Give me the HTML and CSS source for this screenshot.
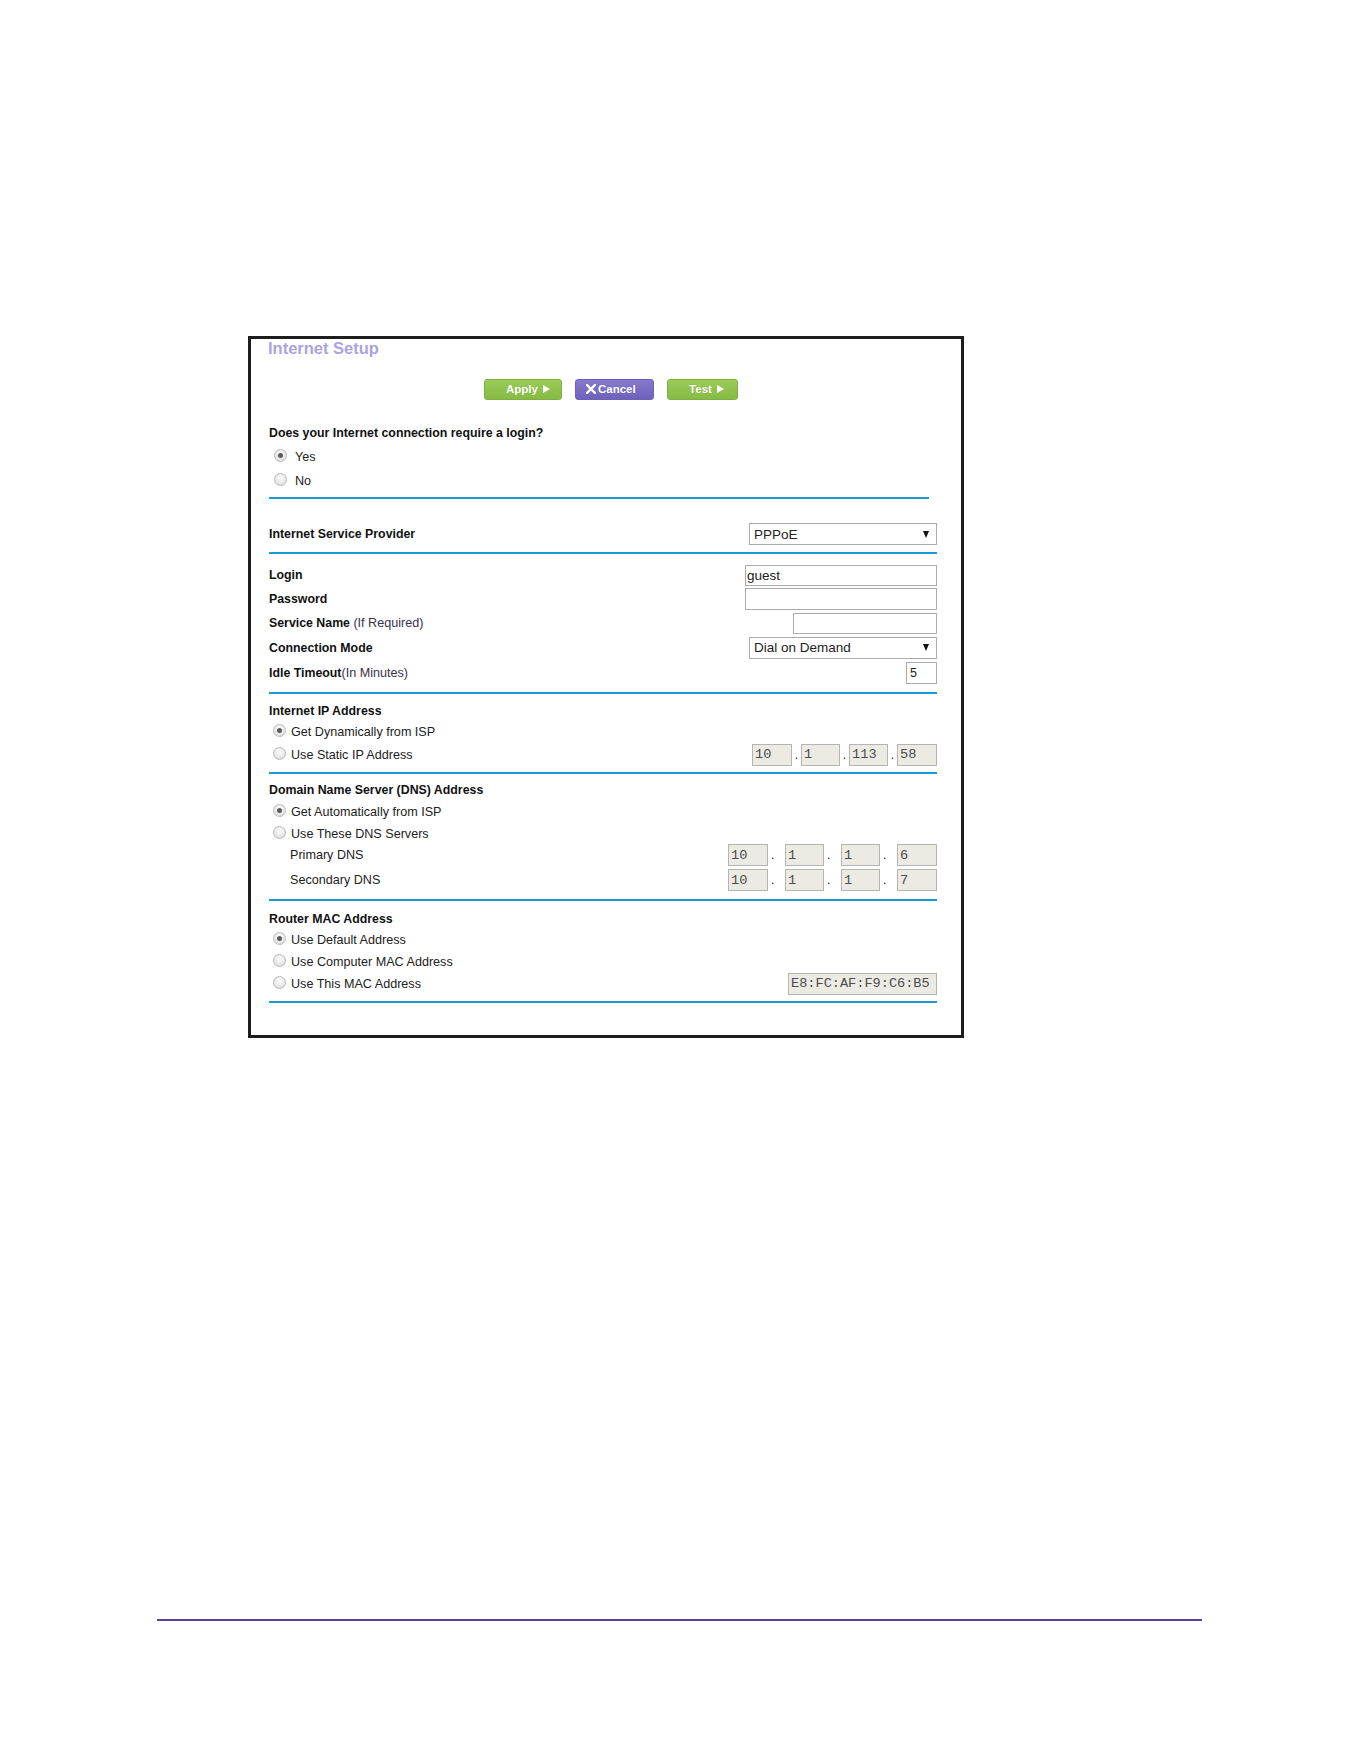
FILE: index.html
```html
<!DOCTYPE html>
<html lang="en">

<head>
    <meta charset="UTF-8">
    <meta name="viewport" content="width=device-width, initial-scale=1.0">
    <title>Internet Setup</title>
    <link rel="stylesheet" href="styles.css">
</head>

<body>
    <div class="page">
        <div class="setup">
            <h1 class="title">Internet Setup</h1>

            <div class="actions">
                <button class="btn btn-go btn-apply">Apply <span class="tri"></span></button>
                <button class="btn btn-cancel">
                    <svg class="x" width="10" height="10" viewBox="0 0 10 10">
                        <path d="M1 1 L9 9 M9 1 L1 9" stroke="#fff" stroke-width="2.4" stroke-linecap="square" />
                    </svg>Cancel</button>
                <button class="btn btn-go btn-test">Test <span class="tri"></span></button>
            </div>

            <!-- login required -->
            <div class="row head first">Does your Internet connection require a login?</div>
            <div class="row opt big"><span class="radio on"></span>Yes</div>
            <div class="row opt big"><span class="radio"></span>No</div>
            <div class="rule short"></div>

            <!-- provider -->
            <div class="row head isp">
                <span>Internet Service Provider</span>
                <div class="select sel-isp"><span>PPPoE</span><span class="arrow"></span></div>
            </div>
            <div class="rule r2"></div>

            <!-- account -->
            <div class="row head acc first-acc">
                <span>Login</span>
                <div class="field f-login">guest</div>
            </div>
            <div class="row head acc">
                <span>Password</span>
                <div class="field f-pass"></div>
            </div>
            <div class="row head acc">
                <span>Service Name <span class="note">(If Required)</span></span>
                <div class="field f-service"></div>
            </div>
            <div class="row head acc h25">
                <span>Connection Mode</span>
                <div class="select sel-mode"><span>Dial on Demand</span><span class="arrow"></span></div>
            </div>
            <div class="row head acc h26">
                <span>Idle Timeout<span class="note">(In Minutes)</span></span>
                <div class="field f-idle">5</div>
            </div>
            <div class="rule r2"></div>

            <!-- internet ip -->
            <div class="row head sub h21">Internet IP Address</div>
            <div class="row opt h22"><span class="radio on"></span>Get Dynamically from ISP</div>
            <div class="row opt h23 split">
                <span class="opt-lbl"><span class="radio"></span>Use Static IP Address</span>
                <div class="ip tight">
                    <span class="oct">10</span><span class="dot">.</span>
                    <span class="oct">1</span><span class="dot">.</span>
                    <span class="oct">113</span><span class="dot">.</span>
                    <span class="oct">58</span>
                </div>
            </div>
            <div class="rule r2"></div>

            <!-- dns -->
            <div class="row head sub">Domain Name Server (DNS) Address</div>
            <div class="row opt h24"><span class="radio on"></span>Get Automatically from ISP</div>
            <div class="row opt h20"><span class="radio"></span>Use These DNS Servers</div>
            <div class="row opt h22 split">
                <span class="indent">Primary DNS</span>
                <div class="ip wide">
                    <span class="oct">10</span><span class="dot">.</span>
                    <span class="oct">1</span><span class="dot">.</span>
                    <span class="oct">1</span><span class="dot">.</span>
                    <span class="oct">6</span>
                </div>
            </div>
            <div class="row opt h22 split second">
                <span class="indent">Secondary DNS</span>
                <div class="ip wide">
                    <span class="oct">10</span><span class="dot">.</span>
                    <span class="oct">1</span><span class="dot">.</span>
                    <span class="oct">1</span><span class="dot">.</span>
                    <span class="oct">7</span>
                </div>
            </div>
            <div class="rule r8"></div>

            <!-- mac -->
            <div class="row head sub mac-head h21">Router MAC Address</div>
            <div class="row opt h22"><span class="radio on"></span>Use Default Address</div>
            <div class="row opt h22"><span class="radio"></span>Use Computer MAC Address</div>
            <div class="row opt h21 split">
                <span class="opt-lbl"><span class="radio"></span>Use This MAC Address</span>
                <span class="oct mac">E8:FC:AF:F9:C6:B5</span>
            </div>
            <div class="rule r7"></div>
        </div>

        <div class="foot-rule"></div>
    </div>
</body>

</html>
```

FILE: styles.css
```css
* {
    margin: 0;
    padding: 0;
    box-sizing: border-box;
}

body {
    background: #fff;
    font-family: "Liberation Sans", Arial, sans-serif;
    font-size: 12.6px;
    color: #111;
}

.page {
    padding-top: 336px;
}

.setup {
    margin-left: 248px;
    width: 716px;
    border: 3px solid #1d1d1d;
    padding: 0 24px 32px 18px;
}

.title {
    font-size: 16.5px;
    line-height: 19px;
    font-weight: bold;
    color: #aaa4de;
    margin-left: -1px;
}

/* buttons */
.actions {
    display: flex;
    gap: 13px;
    margin-top: 21px;
    padding-left: 215px;
    height: 21px;
}

.btn {
    height: 21px;
    border-radius: 3px;
    border: 1px solid #7fae44;
    color: #fff;
    font-family: inherit;
    font-size: 11.5px;
    font-weight: bold;
    display: flex;
    align-items: center;
    justify-content: center;
    padding-bottom: 2px;
    text-shadow: 0 0 1px rgba(0, 0, 0, 0.15);
}

.btn-go {
    background: linear-gradient(#9acb58, #86bb44);
}

.btn-apply {
    width: 78px;
    padding-left: 10px;
}

.btn-test {
    width: 71px;
    padding-left: 8px;
}

.btn-cancel {
    width: 79px;
    border-color: #6d62b4;
    background: linear-gradient(#8579cf, #6e61bb);
    justify-content: flex-start;
    padding-left: 10px;
}

.btn .x {
    margin-right: 2px;
    margin-top: 1px;
}

.tri {
    display: inline-block;
    width: 0;
    height: 0;
    margin-left: 5px;
    border-top: 4px solid transparent;
    border-bottom: 4px solid transparent;
    border-left: 7px solid #fff;
}

/* rows */
.row {
    display: flex;
    align-items: center;
    justify-content: space-between;
    height: 24px;
}

.head {
    font-weight: bold;
    font-size: 12.35px;
}

.first {
    margin-top: 21px;
}

.isp {
    margin-top: 23px;
}

.first-acc {
    margin-top: 9px;
}

.sub {
    margin-top: 6px;
    height: 20px;
}

.mac-head {
    margin-top: 7px;
}

.h20 { height: 20px; }
.h21 { height: 21px; }
.h22 { height: 22px; }
.h23 { height: 23px; }
.h24 { height: 24px; }
.h25 { height: 25px; }
.h26 { height: 26px; }

.second {
    margin-top: 3px;
}

.note {
    font-weight: normal;
    font-size: 12.6px;
    color: #3a3148;
}

.opt {
    justify-content: flex-start;
    color: #222;
}

.opt.split {
    justify-content: space-between;
}

.opt-lbl {
    display: flex;
    align-items: center;
}

.indent {
    padding-left: 21px;
}

/* radio buttons */
.radio {
    width: 13px;
    height: 13px;
    border-radius: 50%;
    border: 1px solid #b9b9b9;
    background: radial-gradient(circle at 50% 35%, #fdfdfd, #d8d8d8);
    margin: -3px 5px 0 4px;
    flex: none;
    position: relative;
}

.radio.on::after {
    content: "";
    position: absolute;
    left: 3px;
    top: 3px;
    width: 5px;
    height: 5px;
    border-radius: 50%;
    background: #5a5a5a;
}

.big .radio {
    margin-left: 5px;
    margin-right: 8px;
}

/* separators */
.rule {
    height: 2px;
    background: #1b9ad6;
    margin-top: 6px;
}

.rule.short {
    margin-top: 4px;
    width: 660px;
}

.r7 { margin-top: 7px; }
.r8 { margin-top: 8px; }

/* inputs */
.field {
    border: 1px solid #ababab;
    background: #fff;
    font-size: 13.5px;
    font-weight: normal;
    color: #222;
    display: flex;
    align-items: center;
    padding-left: 1px;
}

.f-login { width: 192px; height: 21px; }
.f-pass { width: 192px; height: 22px; }
.f-service { width: 144px; height: 21px; }
.f-idle { width: 31px; height: 22px; padding-left: 3px; font-size: 12.5px; }

.select {
    width: 188px;
    height: 22px;
    border: 1px solid #ababab;
    background: #fff;
    display: flex;
    align-items: center;
    justify-content: space-between;
    padding: 0 7px 0 4px;
    font-size: 13.5px;
    font-weight: normal;
    color: #222;
}

.arrow {
    width: 0;
    height: 0;
    border-left: 3.5px solid transparent;
    border-right: 3.5px solid transparent;
    border-top: 7px solid #111;
}

.ip {
    display: flex;
    align-items: center;
}

.oct {
    width: 39px;
    height: 22px;
    border: 1px solid #b4b4b4;
    background: #ebebe4;
    font-family: "Liberation Mono", "Courier New", monospace;
    font-size: 13.7px;
    color: #4d4d4d;
    display: flex;
    align-items: center;
    padding-left: 2px;
}

.ip .oct:first-child,
.ip .oct:last-child {
    width: 40px;
}

.dot {
    font-size: 12px;
    color: #111;
}

.tight .dot {
    width: 9px;
    text-align: center;
}

.wide .dot {
    width: 17px;
    padding-left: 3px;
}

.oct.mac {
    width: 149px;
    height: 22px;
    font-size: 13.6px;
    padding-left: 2px;
}

.foot-rule {
    margin: 581px 0 0 157px;
    width: 1045px;
    height: 2px;
    background: #5d4396;
}
```
